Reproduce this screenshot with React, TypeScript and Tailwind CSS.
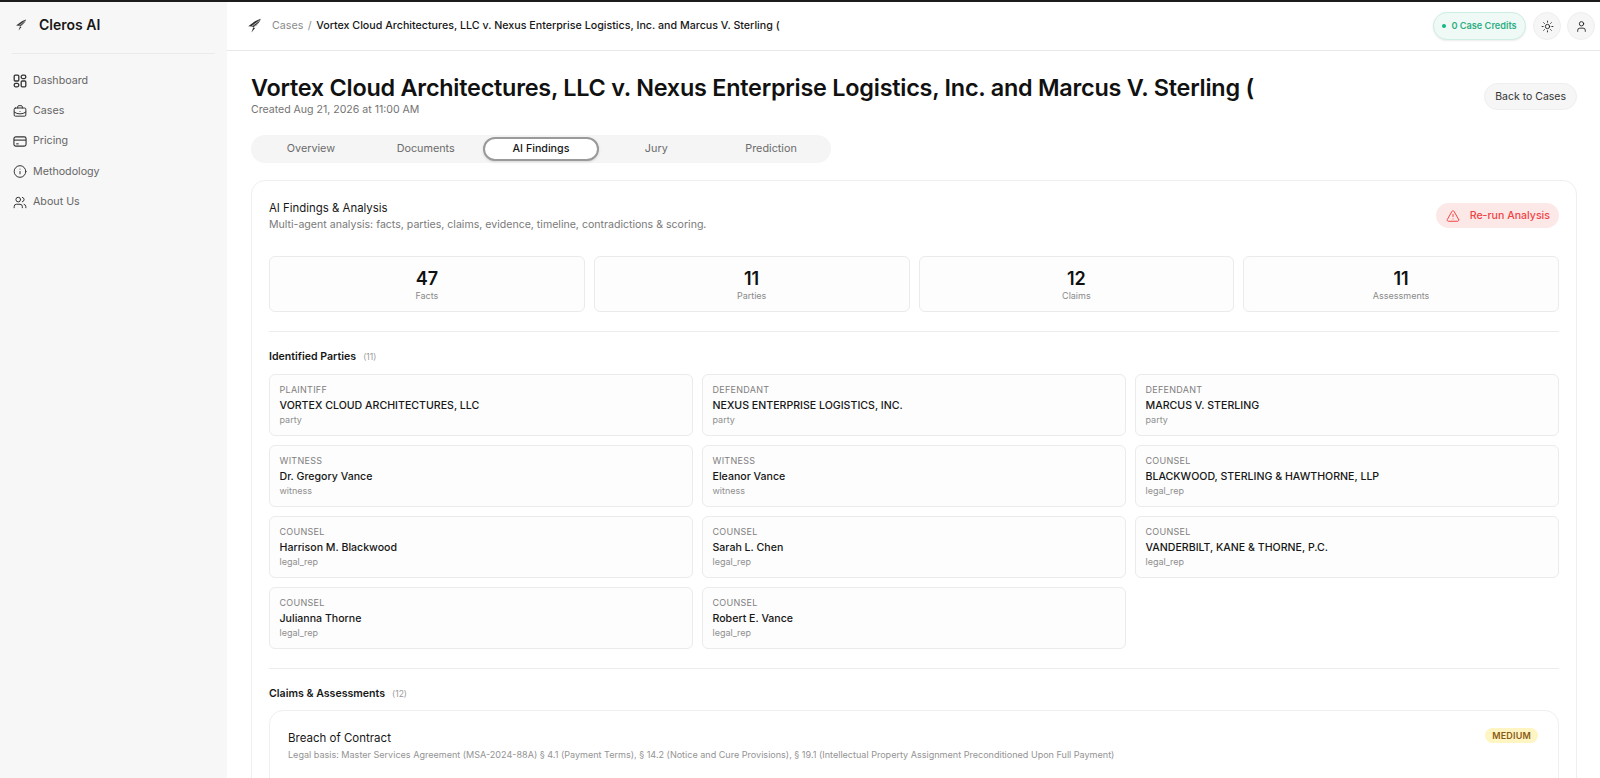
import { BriefcaseBusiness, Info, Sun, TriangleAlert, User, Users } from "lucide-react";

const Logo = ({ className }: { className: string }) => (
  <svg viewBox="0 0 24 24" className={className} fill="currentColor">
    <path d="M22 1 C17 3 12 5 9 8 L2 13 L8 13.5 L10 15 L15 12 C18 9 21 5 22 1 Z" />
    <path d="M10 15 L7 23 L13 16 Z" />
    <path d="M20 4 L8 13" stroke="#fff" strokeWidth="1" fill="none" />
    <path d="M19 8 L11 14" stroke="#fff" strokeWidth="0.8" fill="none" />
  </svg>
);

const DashIcon = () => (
  <svg viewBox="0 0 14 14" className="h-[14px] w-[14px]" fill="none" stroke="currentColor" strokeWidth="1.3">
    <rect x="1.2" y="1.2" width="4.6" height="5.8" rx="1" />
    <rect x="8.2" y="1.2" width="4.6" height="3.4" rx="1.5" />
    <rect x="1.2" y="9.4" width="4.6" height="3.4" rx="1.5" />
    <rect x="8.2" y="7" width="4.6" height="5.8" rx="1" />
  </svg>
);

const CardIcon = () => (
  <svg viewBox="0 0 15 15" className="h-[15px] w-[15px]" fill="none" stroke="currentColor" strokeWidth="1.2">
    <rect x="1" y="2.5" width="13" height="10" rx="2" />
    <path d="M1 6 H14" />
    <path d="M3.5 10 H6" />
  </svg>
);

const nav = [
  { label: "Dashboard", icon: <DashIcon /> },
  { label: "Cases", icon: <BriefcaseBusiness className="h-[15px] w-[15px]" strokeWidth={1.7} /> },
  { label: "Pricing", icon: <CardIcon /> },
  { label: "Methodology", icon: <Info className="h-[15px] w-[15px]" strokeWidth={1.7} /> },
  { label: "About Us", icon: <Users className="h-[15px] w-[15px]" strokeWidth={1.7} /> },
];

const tabs = ["Overview", "Documents", "AI Findings", "Jury", "Prediction"];

const stats = [
  ["47", "Facts"],
  ["11", "Parties"],
  ["12", "Claims"],
  ["11", "Assessments"],
];

const parties = [
  ["PLAINTIFF", "VORTEX CLOUD ARCHITECTURES, LLC", "party"],
  ["DEFENDANT", "NEXUS ENTERPRISE LOGISTICS, INC.", "party"],
  ["DEFENDANT", "MARCUS V. STERLING", "party"],
  ["WITNESS", "Dr. Gregory Vance", "witness"],
  ["WITNESS", "Eleanor Vance", "witness"],
  ["COUNSEL", "BLACKWOOD, STERLING & HAWTHORNE, LLP", "legal_rep"],
  ["COUNSEL", "Harrison M. Blackwood", "legal_rep"],
  ["COUNSEL", "Sarah L. Chen", "legal_rep"],
  ["COUNSEL", "VANDERBILT, KANE & THORNE, P.C.", "legal_rep"],
  ["COUNSEL", "Julianna Thorne", "legal_rep"],
  ["COUNSEL", "Robert E. Vance", "legal_rep"],
];

const title = "Vortex Cloud Architectures, LLC v. Nexus Enterprise Logistics, Inc. and Marcus V. Sterling (";

export default function App() {
  return (
    <div className="flex h-[778px] flex-col overflow-hidden bg-white font-['Inter',sans-serif] text-[#171717]">
      <div className="h-[2px] shrink-0 bg-[#1c1c1c]" />
      <div className="flex min-h-0 flex-1">
        <aside className="w-[227px] shrink-0 bg-[#f7f7f7] px-[12px]">
          <div className="flex h-[52px] items-center gap-[12px] border-b border-[#ebebeb] pb-[6px] pl-[3px]">
            <Logo className="h-[12px] w-[12px] text-[#333]" />
            <span className="text-[14px] font-semibold">Cleros AI</span>
          </div>
          <nav className="mt-[11.5px] flex flex-col">
            {nav.map((n) => (
              <div key={n.label} className="flex h-[30.4px] items-center gap-[6px] pl-[1px] text-[10.7px] text-[#666]">
                <span className="flex w-[14px] justify-center text-[#333]">{n.icon}</span>
                {n.label}
              </div>
            ))}
          </nav>
        </aside>

        <div className="flex min-w-0 flex-1 flex-col">
          <header className="flex h-[49px] shrink-0 items-center justify-between border-b border-[#e8e8e8] pl-[20px] pr-[5px]">
            <div className="flex items-center text-[10.7px]">
              <Logo className="mr-[10px] h-[15px] w-[15px] text-[#333]" />
              <span className="text-[#8a8a8a]">Cases</span>
              <span className="mx-[4.5px] text-[#8a8a8a]">/</span>
              <span className="font-medium">{title}</span>
            </div>
            <div className="flex items-center gap-[6px]">
              <div className="mr-[1px] flex h-[28px] w-[93px] items-center justify-center gap-[5px] rounded-full border border-[#cdeee0] bg-[#effaf6] text-[9.2px] font-semibold text-[#2fae84] shadow-[0_1px_2px_rgba(0,0,0,0.08)]">
                <span className="h-[4px] w-[4px] rounded-full bg-[#10b981]" />
                0 Case Credits
              </div>
              <div className="flex h-[28px] w-[28px] items-center justify-center rounded-full border border-[#eeeeee] bg-[#f6f6f6]">
                <Sun className="h-[13px] w-[13px]" strokeWidth={1.6} />
              </div>
              <div className="flex h-[28px] w-[28px] items-center justify-center rounded-full border border-[#eeeeee] bg-[#f6f6f6]">
                <User className="h-[13px] w-[13px]" strokeWidth={1.6} />
              </div>
            </div>
          </header>

          <main className="min-h-0 flex-1 overflow-hidden pl-[24px] pr-[23px] pt-[25px]">
            <div className="flex items-start justify-between">
              <div>
                <h1 className="text-[23.4px] font-semibold leading-[24px] tracking-[-0.01em] text-[#111]">{title}</h1>
                <p className="mt-[2px] text-[10.55px] leading-[16px] text-[#737373]">Created Aug 21, 2026 at 11:00 AM</p>
              </div>
              <button className="mt-[7px] h-[27px] rounded-full border border-[#eeeeee] bg-[#f6f6f6] px-[10px] text-[10.5px] text-[#333]">
                Back to Cases
              </button>
            </div>

            <div className="mt-[17px] flex h-[28px] w-[580px] items-center rounded-full bg-[#f5f5f5] px-[2.5px]">
              {tabs.map((t) =>
                t === "AI Findings" ? (
                  <div
                    key={t}
                    className="flex h-[24px] w-[116px] items-center justify-center rounded-full border-2 border-[#9a9a9a] bg-white text-[10.7px] font-medium shadow-sm"
                  >
                    {t}
                  </div>
                ) : (
                  <div key={t} className="flex h-[24px] w-[115px] items-center justify-center text-[10.8px] text-[#6b6b6b]">
                    {t}
                  </div>
                ),
              )}
            </div>

            <section className="mt-[17px] rounded-[14px] border border-[#efefef] px-[17px] pt-[19px]">
              <div className="flex items-start justify-between">
                <div>
                  <h2 className="text-[11.4px] leading-[16px] text-[#171717]">AI Findings &amp; Analysis</h2>
                  <p className="mt-[1px] text-[10.58px] leading-[16px] text-[#7a7a7a]">
                    Multi-agent analysis: facts, parties, claims, evidence, timeline, contradictions &amp; scoring.
                  </p>
                </div>
                <button className="mt-[3px] flex h-[25px] items-center gap-[10px] rounded-full bg-[#fde8e8] pl-[9.5px] pr-[9px] text-[10.6px] font-medium text-[#ef4444]">
                  <TriangleAlert className="h-[14px] w-[14px]" strokeWidth={1.7} />
                  Re-run Analysis
                </button>
              </div>

              <div className="mt-[23px] grid grid-cols-4 gap-[9px]">
                {stats.map(([v, l]) => (
                  <div key={l} className="flex h-[56px] flex-col items-center justify-center rounded-[6px] border border-[#ebebeb] bg-[#fdfdfd] pt-[1px]">
                    <span className="text-[18px] font-semibold leading-[22px] text-[#111]">{v}</span>
                    <span className="text-[9px] leading-[12px] text-[#8a8a8a]">{l}</span>
                  </div>
                ))}
              </div>

              <div className="mt-[19px] border-t border-[#ececec]" />

              <div className="mt-[18px] flex items-center gap-[7px]">
                <span className="text-[10.6px] font-semibold leading-[14px]">Identified Parties</span>
                <span className="text-[8.5px] text-[#9a9a9a]">(11)</span>
              </div>

              <div className="mt-[10px] grid grid-cols-3 gap-[9px]">
                {parties.map(([role, name, kind]) => (
                  <div key={name} className="flex h-[62px] flex-col justify-center rounded-[6px] border border-[#ebebeb] bg-[#fdfdfd] px-[9.5px]">
                    <span className="text-[9px] leading-[14px] tracking-[0.03em] text-[#808080]">{role}</span>
                    <span className="mt-[1px] text-[10.6px] font-medium leading-[16px] text-[#171717]">{name}</span>
                    <span className="-mt-[2px] text-[9px] leading-[15px] text-[#8f8f8f]">{kind}</span>
                  </div>
                ))}
              </div>

              <div className="mt-[19px] border-t border-[#ececec]" />

              <div className="mt-[18px] flex items-center gap-[7px]">
                <span className="text-[10.6px] font-semibold leading-[14px]">Claims &amp; Assessments</span>
                <span className="text-[8.5px] text-[#9a9a9a]">(12)</span>
              </div>

              <div className="mt-[9px] h-[100px] rounded-[14px] border border-[#efefef] pl-[18px] pr-[20px] pt-[19px]">
                <div className="flex items-start justify-between">
                  <span className="text-[11.5px] leading-[16px]">Breach of Contract</span>
                  <span className="-mt-[2px] rounded-full bg-[#fef5c3] px-[7px] py-[1px] text-[9px] font-semibold leading-[13px] tracking-[0.02em] text-[#8a5a14]">
                    MEDIUM
                  </span>
                </div>
                <p className="mt-[2px] text-[9.05px] leading-[14px] text-[#949494]">
                  Legal basis: Master Services Agreement (MSA-2024-88A) § 4.1 (Payment Terms), § 14.2 (Notice and Cure Provisions), § 19.1 (Intellectual Property Assignment Preconditioned Upon Full Payment)
                </p>
              </div>
            </section>
          </main>
        </div>
      </div>
    </div>
  );
}
